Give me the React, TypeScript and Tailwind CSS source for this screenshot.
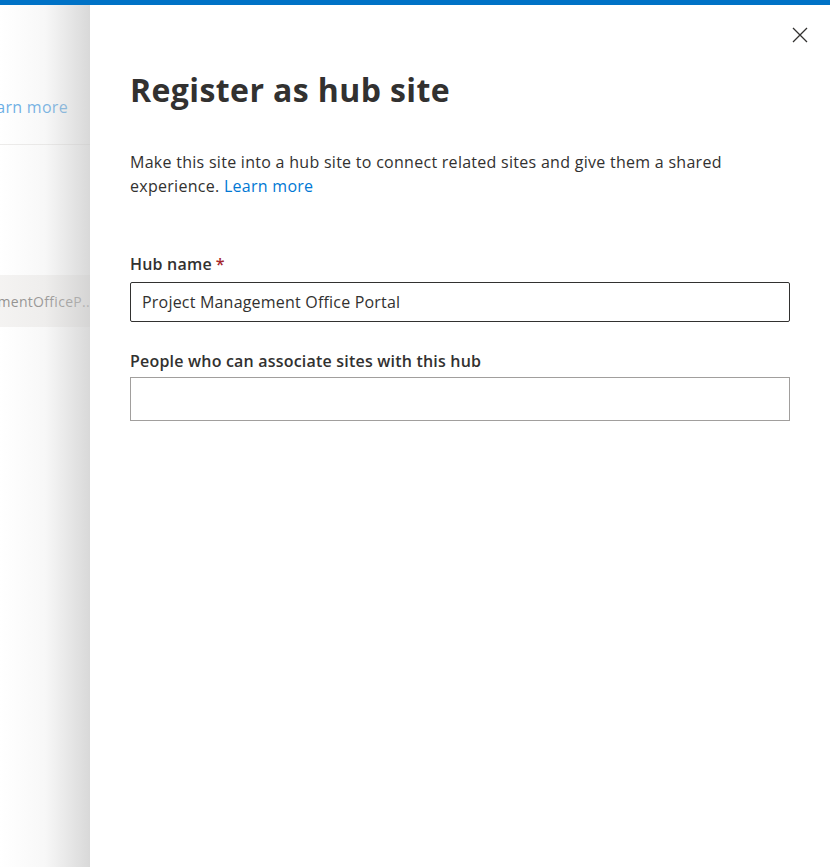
function BackgroundPage() {
  return (
    <div className="relative w-[90px] shrink-0 overflow-hidden bg-white">
      <div className="h-[140px] border-b border-[#e1dfdd] flex justify-end items-start">
        <span className="mt-[90px] mr-[22px] whitespace-nowrap text-[16px] tracking-[0.3px] text-[#0078d4]">Learn more</span>
      </div>
      <div className="mt-[130px] h-[52px] bg-[#edebe9] flex items-center justify-end overflow-hidden">
        <span className="whitespace-nowrap text-[14px] tracking-[0.3px] text-[#484644] -mr-[4px]">ProjectManagementOfficeP...</span>
      </div>
      {/* dim + panel shadow */}
      <div className="absolute inset-0 bg-gradient-to-r from-white/40 via-[#f0f0f0]/50 to-[#cfcfcf]/80 pointer-events-none" />
    </div>
  );
}

function Field({ label, required, value, strong }: { label: string; required?: boolean; value?: string; strong?: boolean }) {
  return (
    <div className="flex flex-col">
      <label className={"text-[16px] font-semibold text-[#323130] leading-[22px] tracking-[0.2px] " + (strong ? "pb-[7px]" : "pb-[5px]")}>
        {label}
        {required && <span className="text-[#a4262c] ml-1">*</span>}
      </label>
      <div
        className={
          strong
            ? "h-[40px] border border-[#323130] rounded-[2px] px-[11px] flex items-center"
            : "h-[44px] border border-[#a19f9d] flex items-center px-[11px]"
        }
      >
        <span className="text-[16px] tracking-[0.2px] text-[#323130]">{value}</span>
      </div>
    </div>
  );
}

export default function App() {
  return (
    <div className="w-[830px] h-[867px] flex flex-col bg-white overflow-hidden" style={{ fontFamily: '"Open Sans", "Noto Sans", sans-serif' }}>
      <div className="h-[5px] bg-[#0072c6] shrink-0" />
      <div className="flex flex-1 min-h-0">
        <BackgroundPage />
        <div className="relative flex-1 bg-white pl-[40px] pr-[40px]">
          <button className="absolute top-[22px] right-[22px] w-[16px] h-[16px] text-[#323130]">
            <svg width="16" height="16" viewBox="0 0 16 16" fill="none" stroke="currentColor" strokeWidth="1.3">
              <path d="M1 1L15 15M15 1L1 15" />
            </svg>
          </button>
          <h1 className="mt-[65px] text-[32px] leading-[40px] font-bold text-[#323130] tracking-[0.4px]">Register as hub site</h1>
          <p className="mt-[40px] text-[16px] leading-[24px] tracking-[0.28px] text-[#323130]">
            Make this site into a hub site to connect related sites and give them a shared experience.{" "}
            <a className="text-[#0078d4]">Learn more</a>
          </p>
          <div className="mt-[55px] flex flex-col gap-[28px]">
            <Field label="Hub name" required value="Project Management Office Portal" strong />
            <Field label="People who can associate sites with this hub" />
          </div>
        </div>
      </div>
    </div>
  );
}
